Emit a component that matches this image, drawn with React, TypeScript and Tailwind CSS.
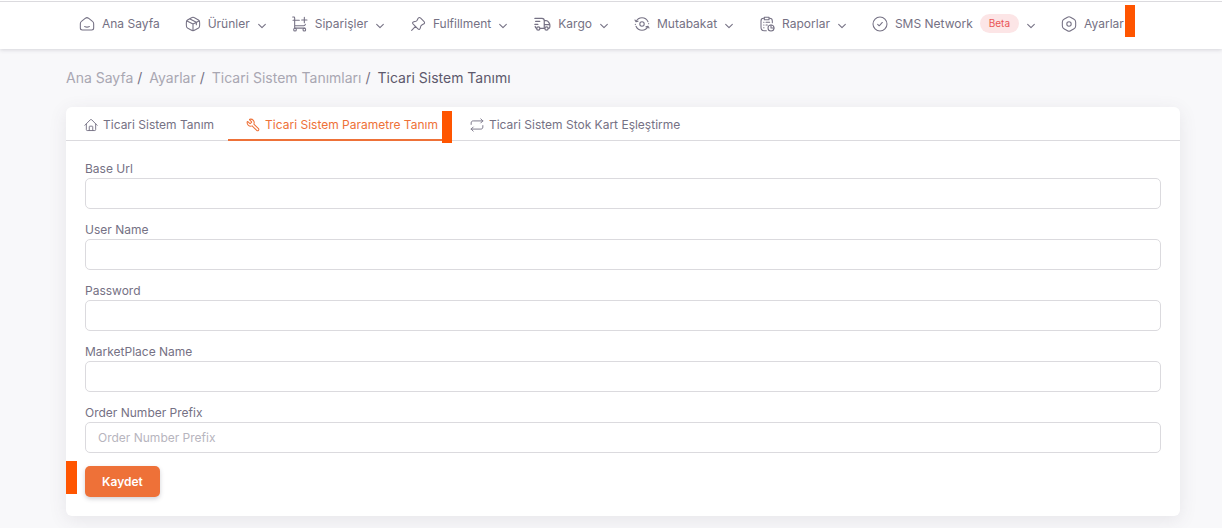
import type { ReactNode } from "react";
import { Wrench } from "lucide-react";

function Icon({ children, className = "size-4" }: { children: ReactNode; className?: string }) {
  return (
    <svg
      viewBox="0 0 24 24"
      fill="none"
      stroke="currentColor"
      strokeWidth="1.6"
      strokeLinecap="round"
      strokeLinejoin="round"
      aria-hidden="true"
      className={`${className} shrink-0`}
    >
      {children}
    </svg>
  );
}

const icons = {
  home: (
    <Icon>
      <path d="M2 11.500c0-1.600.5-2.500 1.700-3.400L9.700 3.300c1.500-1.100 3-1.100 4.500 0l6 4.800c1.200.9 1.800 1.800 1.800 3.400V18c0 2-1 3-3 3H5c-2 0-3-1-3-3z" />
      <path d="M8.500 15.800c2 1 5 1 7 0" />
    </Icon>
  ),
  box: (
    <Icon>
      <path d="M15.600 3.300l2 1.100c2.200 1.100 3.200 1.700 3.800 2.700.6 1 .6 2.200.6 4.700v.3c0 2.500 0 3.800-.6 4.800-.6 1-1.700 1.600-3.800 2.700l-2 1.100C13.800 21.600 12.900 22 12 22s-1.800-.4-3.600-1.300l-2-1.100c-2.200-1.100-3.200-1.700-3.800-2.700-.6-1-.6-2.300-.6-4.800v-.3c0-2.500 0-3.700.6-4.700.6-1 1.700-1.600 3.800-2.700l2-1.100C10.200 2.400 11.100 2 12 2s1.800.4 3.600 1.300z" />
      <path d="M21 7.500L12 12M12 12L3 7.500M12 12v9.500M17 9.500v3.500M17 9.500L7.500 4.500" />
    </Icon>
  ),
  cart: (
    <Icon>
      <path d="M1 1.500h1.800c.8 0 1.200.5 1.200 1.400V18.200h15.500M4 14.500h13.500c1.500 0 2.200-.6 2.500-2M1.500 6.500H11M18.500 2v8M14.500 6h8" />
      <circle cx="4.500" cy="20.500" r="2" />
      <circle cx="18.500" cy="20.500" r="2" />
    </Icon>
  ),
  pin: (
    <Icon>
      <path d="M8.300 15.700L2.500 21.500M16 3.200l4.800 4.800c1.600 1.600 1.400 3-.5 4l-2.600 1.400c-.9.500-1.200.9-1.500 1.900l-.8 3c-.6 2.100-2 2.500-3.500 1L4.800 12.200c-1.500-1.500-1.200-2.900 1-3.500l3-.8c1-.3 1.400-.6 1.900-1.500L12 3.700c1-1.900 2.400-2.100 4-.5z" />
    </Icon>
  ),
  truck: (
    <Icon className="size-[18px]">
      <path d="M2.500 4.500H12c2 0 3 1 3 3v10M3.500 8.500H9M2.500 12.500h4M3 15v.5c0 1.300.5 2 2 2.200M9.500 17.700h6M15 7.500h2.500c1.500 0 2.200.4 3 1.700l1.300 2c.5.900.7 1.400.7 2.500v2c0 1.600-.5 2.200-2 2.200M15.500 12.700h6.500" />
      <circle cx="7" cy="18" r="2.200" />
      <circle cx="18" cy="18" r="2.200" />
    </Icon>
  ),
  sync: (
    <Icon>
      <circle cx="12" cy="12" r="3.300" />
      <path d="M3 8.500C4.800 4.500 8 2.500 12 2.500s7.200 2 9 6M1.500 6l1.500 2.700 3-1M21 15.500c-1.800 4-5 6-9 6s-7.200-2-9-6M22.500 18L21 15.300l-3 1M2 12.300v.5M22 11.200v.5" />
    </Icon>
  ),
  report: (
    <Icon>
      <path d="M16 3.500c3 0 4 1 4 4V10M7 3.500c-3 0-4 1-4 4V17c0 3.500 1 5 4.500 5H11M8 2h7v3.500H8zM7 9.500h.5M7 13.500h.5M7 17.500h.5M10.500 9.500H16M10.500 13.500h2" />
      <circle cx="18" cy="18" r="4.500" />
      <path d="M18 13.500V18h4.500" />
    </Icon>
  ),
  check: (
    <Icon>
      <circle cx="12" cy="12" r="10.500" />
      <path d="M8.500 12.500l2.300 2.200 4.700-5" />
    </Icon>
  ),
  settings: (
    <Icon>
      <path d="M12 1c1 0 1.600.4 3.500 1.500l3.500 2c2.500 1.400 3 2 3 4.500v6c0 2.500-.5 3.100-3 4.500l-3.500 2C13.600 22.600 13 23 12 23s-1.600-.4-3.500-1.500l-3.500-2C2.500 18.100 2 17.500 2 15V9c0-2.500.5-3.100 3-4.500l3.500-2C10.400 1.400 11 1 12 1z" />
      <circle cx="12" cy="12" r="3.300" />
    </Icon>
  ),
  house: (
    <Icon className="size-[14px]">
      <path d="M1.500 12.500L10.800 3a1.700 1.700 0 012.400 0l9.300 9.500M4 10.500V20c0 1 .5 1.500 1.500 1.500h13c1 0 1.500-.5 1.500-1.500v-9.500M9 21.500V15c0-.7.400-1 1-1h4c.6 0 1 .3 1 1v6.500" />
    </Icon>
  ),
  wrench: <Wrench aria-hidden="true" strokeWidth={1.8} className="size-[14px] shrink-0 -scale-x-100" />,
  repeat: (
    <Icon className="size-[14px]">
      <path d="M2 11V8.500C2 6 3.500 5 5.500 5H22M18.500 1.500L22 5l-3.500 3.500M22 13v2.500c0 2.500-1.500 3.500-3.500 3.500H2M5.500 15.500L2 19l3.500 3.500" />
    </Icon>
  ),
};

function Chevron() {
  return (
    <Icon className="mt-1 size-[10px]">
      <path d="M4 8l8 8 8-8" strokeWidth="2.600" />
    </Icon>
  );
}

/* Highlight bar laid over the controls that a guide points at. */
function Marker({ className }: { className: string }) {
  return <span aria-hidden="true" className={`absolute bg-[#ff5500] ${className}`} />;
}

type NavEntry = { label: string; icon: ReactNode; menu?: boolean; badge?: string; marked?: boolean };

const nav: NavEntry[] = [
  { label: "Ana Sayfa", icon: icons.home },
  { label: "Ürünler", icon: icons.box, menu: true },
  { label: "Siparişler", icon: icons.cart, menu: true },
  { label: "Fulfillment", icon: icons.pin, menu: true },
  { label: "Kargo", icon: icons.truck, menu: true },
  { label: "Mutabakat", icon: icons.sync, menu: true },
  { label: "Raporlar", icon: icons.report, menu: true },
  { label: "SMS Network", icon: icons.check, menu: true, badge: "Beta" },
  { label: "Ayarlar", icon: icons.settings, marked: true },
];

const crumbs = ["Ana Sayfa", "Ayarlar", "Ticari Sistem Tanımları"];

const tabs = [
  { label: "Ticari Sistem Tanım", icon: icons.house },
  { label: "Ticari Sistem Parametre Tanım", icon: icons.wrench, active: true },
  { label: "Ticari Sistem Stok Kart Eşleştirme", icon: icons.repeat },
];

const fields = [
  { id: "base-url", label: "Base Url", type: "text" },
  { id: "user-name", label: "User Name", type: "text" },
  { id: "password", label: "Password", type: "password" },
  { id: "marketplace", label: "MarketPlace Name", type: "text" },
  { id: "prefix", label: "Order Number Prefix", type: "text", placeholder: "Order Number Prefix" },
];

export default function App() {
  return (
    <div className="min-h-screen bg-[#f8f8fa] pb-3 font-['Inter','Liberation_Sans',sans-serif] text-xs text-[#757184]">
      <header className="bg-white pt-px shadow-[0_1px_4px_rgba(75,70,92,0.2)]">
        <nav className="flex h-12 items-center gap-[25px] border-t border-[#dbdade] pr-[42px] pb-1 pl-[79px]">
          {nav.map((item) => {
            const body = (
              <>
                {item.icon}
                <span>{item.label}</span>
                {item.badge && (
                  <span className="rounded-full bg-[#fce5e6] px-[9px] py-[3px] text-[10px] leading-[13px] text-[#ea5455]">
                    {item.badge}
                  </span>
                )}
                {item.menu && <Chevron />}
              </>
            );
            const style = "relative flex shrink-0 items-center gap-[7px] whitespace-nowrap";
            return item.menu ? (
              <button key={item.label} type="button" className={style}>
                {body}
              </button>
            ) : (
              <a key={item.label} href="#" className={style}>
                {body}
                {item.marked && <Marker className="-top-[11px] left-full ml-px h-8 w-[10px]" />}
              </a>
            );
          })}
        </nav>
      </header>

      <main className="pr-[42px] pl-[66px]">
        <nav aria-label="Breadcrumb" className="pt-[18px] pb-[19px]">
          <ol className="flex text-sm leading-[21px]">
            {crumbs.map((crumb) => (
              <li key={crumb} className="mr-[7px]">
                <a href="#" className="text-[#a9a7b2]">
                  {crumb}
                </a>
                <span className="ml-1">/</span>
              </li>
            ))}
            <li aria-current="page" className="text-[#5d596c]">
              Ticari Sistem Tanımı
            </li>
          </ol>
        </nav>

        <section className="rounded-md bg-white shadow-[0_4px_18px_rgba(75,70,92,0.1)]">
          <div role="tablist" className="flex h-[34px] border-b border-[#dbdade]">
            {tabs.map((tab) => (
              <button
                key={tab.label}
                type="button"
                role="tab"
                aria-selected={!!tab.active}
                className={`relative -mb-px flex items-center gap-[5px] border-b-2 pt-1 pr-[14px] pl-[18px] ${
                  tab.active ? "border-[#ee7138] text-[#ee7138]" : "border-transparent"
                }`}
              >
                {tab.icon}
                <span>{tab.label}</span>
                {tab.active && <Marker className="top-1 right-0 h-8 w-[10px]" />}
              </button>
            ))}
          </div>

          <form className="relative px-[19px] pt-[19px] pb-[19px]" onSubmit={(e) => e.preventDefault()}>
            {fields.map((field) => (
              <div key={field.id} className="mb-3">
                <label htmlFor={field.id} className="block leading-[18px]">
                  {field.label}
                </label>
                <input
                  id={field.id}
                  type={field.type}
                  placeholder={field.placeholder}
                  className="block h-[31px] w-full rounded-[5px] border border-[#dbdade] bg-white px-3 outline-none placeholder:text-[#b7b5be] focus:border-[#ee7138]"
                />
              </div>
            ))}
            <div className="flex pt-px">
              <button
                type="submit"
                className="h-[31px] rounded-[5px] bg-[#ee7138] px-[17px] font-semibold text-white shadow-[0_2px_4px_rgba(75,70,92,0.25)]"
              >
                Kaydet
              </button>
            </div>
            <Marker className="bottom-[22px] left-0 h-[33px] w-[11px]" />
          </form>
        </section>
      </main>
    </div>
  );
}
